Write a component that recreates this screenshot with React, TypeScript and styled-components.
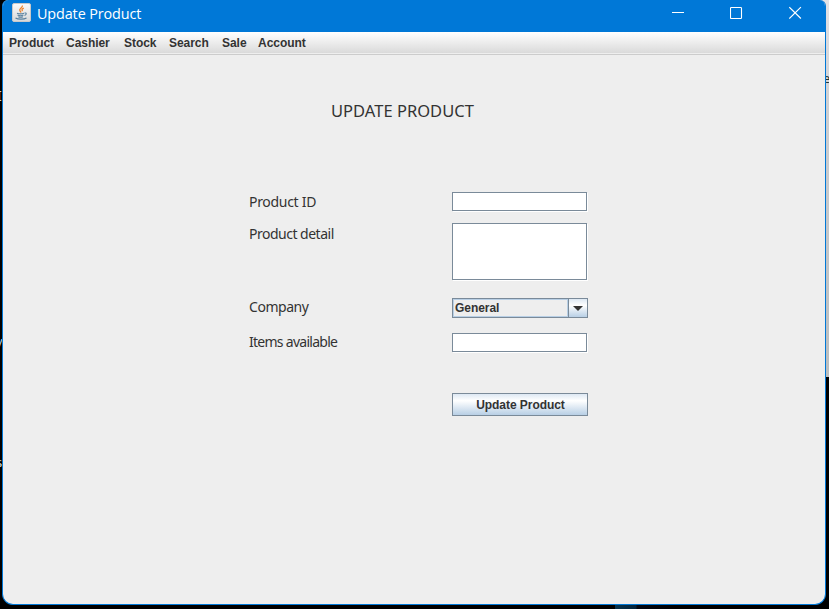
import React from 'react';
import styled, { createGlobalStyle } from 'styled-components';

const GlobalStyle = createGlobalStyle`
  * { box-sizing: border-box; }
  body { margin: 0; background: #000; overflow: hidden; }
`;

const Desktop = styled.div`
  position: relative;
  width: 829px;
  height: 609px;
  padding: 0 3px 4px 2px;
  background:
    linear-gradient(#e2e2e6, #cfcfd1 110px, #bcbebe 377px) right top / 10px 377px no-repeat,
    linear-gradient(90deg, #06334d, #04233a 21px, #020712 22px, #000) 615px 605px / 60px 4px no-repeat,
    #000;
  overflow: hidden;
`;

const Behind = styled.span<{ $x: number; $y: number; $color: string; $size: number }>`
  position: absolute;
  left: ${p => p.$x}px;
  top: ${p => p.$y}px;
  color: ${p => p.$color};
  font: ${p => p.$size}px/16px 'Noto Sans', sans-serif;
`;

const Window = styled.div`
  position: relative;
  display: flex;
  flex-direction: column;
  height: 605px;
  border: 1px solid #0078d7;
  border-top: 0;
  border-radius: 6px 6px 11px 11px;
  background: #eee;
  overflow: hidden;
`;

const TitleBar = styled.header`
  display: flex;
  flex: 0 0 32px;
  align-items: flex-start;
  padding-left: 9px;
  background: #0078d7;
`;

const AppIcon = styled.svg`
  flex: none;
  margin-top: 3px;
`;

const Title = styled.div`
  flex: 1;
  margin-left: 6px;
  color: #fff;
  font: 14.4px/28px 'Open Sans', sans-serif;
  letter-spacing: -0.12px;
`;

const Controls = styled.div`
  display: flex;
  gap: 46px;
  padding: 6px 23px 0 0;
  svg { display: block; }
`;

const MenuBar = styled.nav`
  display: flex;
  flex: 0 0 23px;
  padding-left: 6px;
  border-bottom: 1px solid #ccc;
  background: linear-gradient(#fff, #dadada 21px, #eee 21px);
`;

const MenuItem = styled.span<{ $width: number }>`
  width: ${p => p.$width}px;
  color: #333;
  font: bold 12px/22px 'Liberation Sans', sans-serif;
  letter-spacing: -0.04px;
`;

const Content = styled.main`
  display: flex;
  flex-direction: column;
  padding: 45px 0 0 246px;
`;

const Heading = styled.h1`
  margin: 0 0 71px 82px;
  color: #333;
  font: 400 16.5px/21px 'Noto Sans', sans-serif;
  letter-spacing: 0.02px;
`;

const Row = styled.div<{ $gap: number }>`
  display: grid;
  grid-template-columns: 203px 136px;
  align-items: start;
  margin-bottom: ${p => p.$gap}px;
`;

const Label = styled.label<{ $spacing?: number; $line?: number }>`
  height: 19px;
  color: #333;
  font: 14px/${p => p.$line ?? 20}px 'Noto Sans', sans-serif;
  letter-spacing: ${p => p.$spacing ?? -0.3}px;
`;

const Field = styled.div<{ $height: number }>`
  width: 135px;
  height: ${p => p.$height}px;
  border: 1px solid #7a8a99;
  background: #fff;
  box-shadow: 1px 1px #fff;
`;

const Select = styled.div`
  display: flex;
  width: 136px;
  height: 20px;
  border: 1px solid #7a8a99;
`;

const Value = styled.span`
  flex: 1;
  padding-left: 1px;
  border: 1px solid #b8cfe5;
  color: #333;
  font: bold 12px/17px 'Liberation Sans', sans-serif;
  letter-spacing: -0.05px;
`;

const Arrow = styled.span`
  display: flex;
  width: 19px;
  padding: 7px 0 0 4px;
  border-left: 1px solid #7a8a99;
  background: linear-gradient(#dde8f3, #fff 35%, #b8cfe5);
`;

const Button = styled.button`
  grid-column: 2;
  width: 136px;
  height: 23px;
  padding: 1px 0 0 1px;
  border: 1px solid #7a8a99;
  background: linear-gradient(#dde8f3, #fff 32%, #b8cfe5);
  color: #333;
  font: bold 12px/20px 'Liberation Sans', sans-serif;
  letter-spacing: -0.05px;
`;

const menus: [string, number][] = [
  ['Product', 57], ['Cashier', 58], ['Stock', 45], ['Search', 53], ['Sale', 36], ['Account', 60],
];

export default function App() {
  return (
    <>
      <GlobalStyle />
      <Desktop>
        <Behind $x={-3} $y={88} $color="#ddd" $size={14}>I</Behind>
        <Behind $x={-4} $y={333} $color="#bcd" $size={13}>y</Behind>
        <Behind $x={-4} $y={454} $color="#ddd" $size={13}>s</Behind>
        <Behind $x={823} $y={70} $color="#233" $size={13}>e</Behind>
        <Window>
          <TitleBar>
            <AppIcon width="19" height="19" viewBox="0 0 19 19" fill="none">
              <defs>
                <linearGradient id="tile" x2="0" y2="1">
                  <stop stopColor="#fafafa" />
                  <stop offset="1" stopColor="#d6d8da" />
                </linearGradient>
              </defs>
              <rect x=".5" y=".5" width="18" height="18" rx="1.5" fill="url(#tile)" stroke="#c9c9c9" />
              <path d="M10.300 2.500c1 2-3.500 3-2.500 5 .3.8 1 1.200 1.300 2M11.800 5.200c-2 1-2.300 1.700-1.200 3" stroke="#ec842e" strokeWidth="1.3" />
              <path d="M5 10.200c2 .8 5 .8 7 0M5.500 12c2 .9 4.200.9 6 0M6.300 13.700c1.500.7 3.200.7 4.700 0M12.500 10c2.300-.5 2.300 1.800 0 2.500M3.500 15c2.500 1.500 8.500 1.500 11 0" stroke="#58809f" strokeWidth="1.1" />
            </AppIcon>
            <Title>Update Product</Title>
            <Controls>
              <svg width="12" height="13" fill="#fff"><path d="M0 6h12v1H0z" /></svg>
              <svg width="13" height="13" fill="none" stroke="#fff" strokeWidth="1.1"><rect x=".5" y="1.500" width="11" height="11" rx=".8" /></svg>
              <svg width="13" height="13" fill="none" stroke="#fff" strokeWidth="1.15"><path d="M.3 1.200l11.600 11.300M11.900 1.200L.3 12.500" /></svg>
            </Controls>
          </TitleBar>
          <MenuBar>
            {menus.map(([name, width]) => <MenuItem key={name} $width={width}>{name}</MenuItem>)}
          </MenuBar>
          <Content>
            <Heading>UPDATE PRODUCT</Heading>
            <Row $gap={12}><Label>Product ID</Label><Field $height={19} /></Row>
            <Row $gap={18}><Label $line={22} $spacing={-0.5}>Product detail</Label><Field $height={57} /></Row>
            <Row $gap={15}>
              <Label $line={18} $spacing={-0.45}>Company</Label>
              <Select>
                <Value>General</Value>
                <Arrow><svg width="10" height="5" fill="#333"><path d="M0 0h10L5 5z" /></svg></Arrow>
              </Select>
            </Row>
            <Row $gap={41}><Label $line={18} $spacing={-0.73}>Items available</Label><Field $height={19} /></Row>
            <Row $gap={0}><Button>Update Product</Button></Row>
          </Content>
        </Window>
      </Desktop>
    </>
  );
}
